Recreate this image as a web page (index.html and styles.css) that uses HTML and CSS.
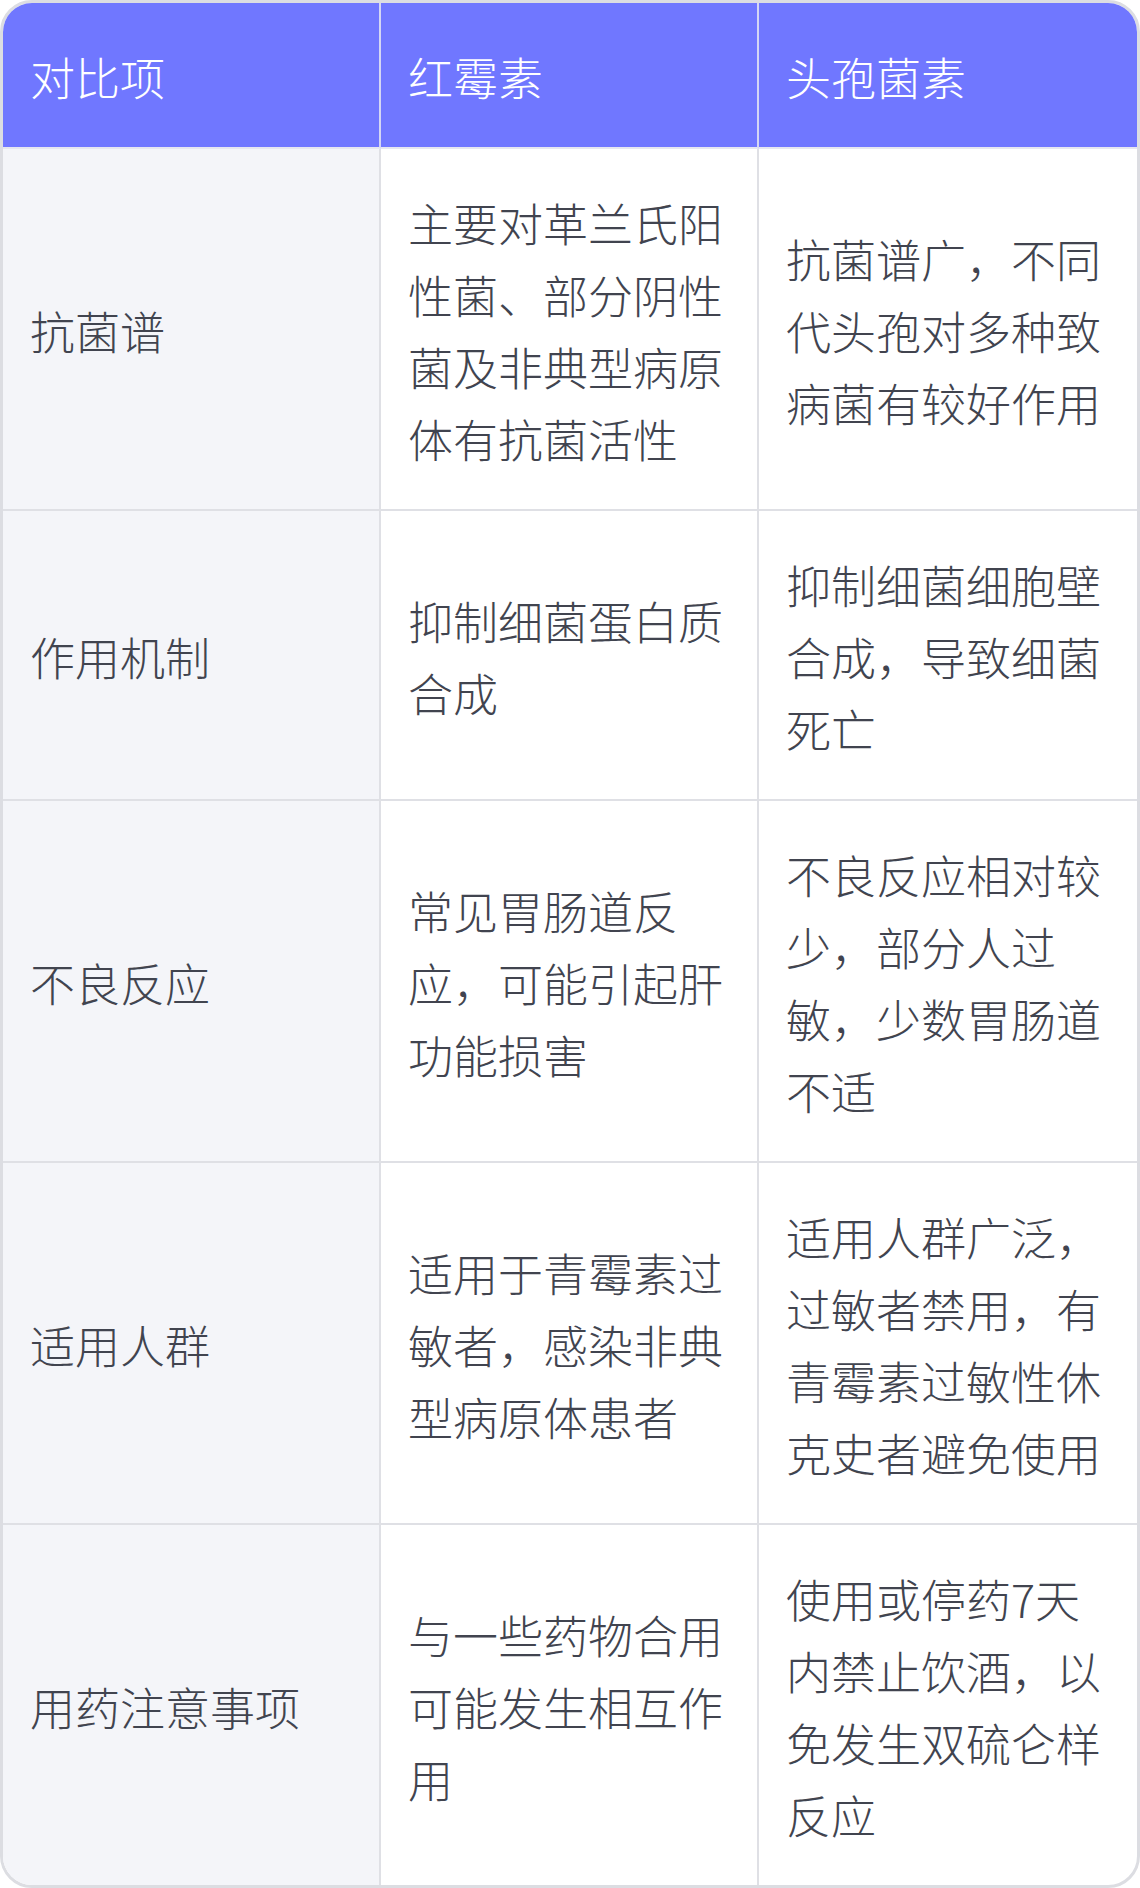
FILE: index.html
```html
<!DOCTYPE html>
<html lang="zh-CN">
<head>
<meta charset="utf-8">
<link rel="stylesheet" href="styles.css">
</head>
<body>
<div class="wrap">
<table class="cmp">
<thead>
<tr><th>对比项</th><th>红霉素</th><th>头孢菌素</th></tr>
</thead>
<tbody>
<tr><td class="key">抗菌谱</td><td>主要对革兰氏阳性菌、部分阴性菌及非典型病原体有抗菌活性</td><td>抗菌谱广，不同代头孢对多种致病菌有较好作用</td></tr>
<tr><td class="key">作用机制</td><td>抑制细菌蛋白质合成</td><td>抑制细菌细胞壁合成，导致细菌死亡</td></tr>
<tr><td class="key">不良反应</td><td>常见胃肠道反应，可能引起肝功能损害</td><td>不良反应相对较少，部分人过敏，少数胃肠道不适</td></tr>
<tr><td class="key">适用人群</td><td>适用于青霉素过敏者，感染非典型病原体患者</td><td>适用人群广泛，过敏者禁用，有青霉素过敏性休克史者避免使用</td></tr>
<tr><td class="key">用药注意事项</td><td>与一些药物合用可能发生相互作用</td><td>使用或停药7天内禁止饮酒，以免发生双硫仑样反应</td></tr>
</tbody>
</table>
</div>
</body>
</html>
```
FILE: styles.css
```css
html, body {
  margin: 0;
  padding: 0;
  background: #ffffff;
}
.wrap {
  width: 1140px;
  box-sizing: border-box;
  border: 3px solid #dcdde2;
  border-radius: 32px;
  overflow: hidden;
  background: #ffffff;
}
.cmp {
  width: 100%;
  table-layout: fixed;
  border-collapse: separate;
  border-spacing: 0;
  font-family: "Noto Sans CJK SC", "Noto Sans", sans-serif;
  font-size: 45px;
  line-height: 72px;
  color: #41444f;
}
.cmp th, .cmp td {
  padding: 38px 27px 34px;
  text-align: left;
  vertical-align: middle;
  font-weight: 300;
  border-right: 2px solid #dfe0e5;
  border-bottom: 2px solid #dfe0e5;
}
.cmp th:last-child, .cmp td:last-child {
  border-right: none;
}
.cmp tbody tr:last-child td {
  border-bottom: none;
}
.cmp th {
  background: #7077ff;
  color: #ffffff;
  border-right-color: #d4d6f4;
  border-bottom-color: #e6e7f0;
}
.cmp td.key {
  background: #f4f5f9;
}
```
